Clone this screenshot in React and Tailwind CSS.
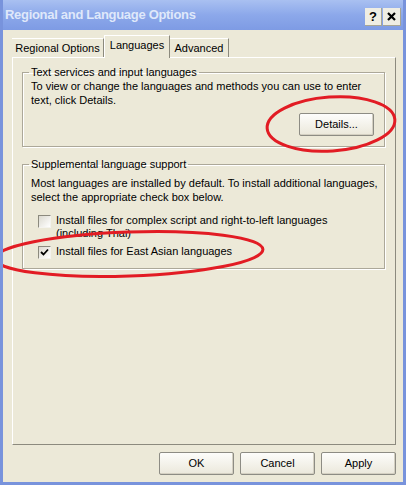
import React, { useState } from 'react';

const font = { fontFamily: '"Liberation Sans", Arial, sans-serif' };

const tabs = ['Regional Options', 'Languages', 'Advanced'];
const tabWidths = {
  'Regional Options': 'w-[92px]',
  Languages: 'w-[66px]',
  Advanced: 'w-[59px]',
};

// XP-ish push button
const Button = ({ children, className = '' }) => (
  <button
    className={`h-[23px] w-[75px] rounded-[2px] border border-[#8d8c84] bg-gradient-to-b from-[#fdfdfb] to-[#ebe8db] text-[11px] text-black shadow-[inset_-1px_-1px_0_#d4d0c2] ${className}`}
  >
    {children}
  </button>
);

const Checkbox = ({ checked, onChange }) => (
  <button
    onClick={onChange}
    className="mt-[1px] flex h-[13px] w-[13px] shrink-0 items-center justify-center border border-t-[#8c8a7e] border-l-[#8c8a7e] border-r-[#f4f3ee] border-b-[#f4f3ee] bg-gradient-to-br from-[#dcdad0] to-white"
  >
    {checked && (
      <svg width="9" height="9" viewBox="0 0 9 9">
        <path d="M1 4 L3.5 6.5 L8 1.5" fill="none" stroke="#000" strokeWidth="1.8" />
      </svg>
    )}
  </button>
);

const App = () => {
  const [activeTab, setActiveTab] = useState('Languages');
  const [complex, setComplex] = useState(false);
  const [eastAsian, setEastAsian] = useState(true);

  return (
    <div
      style={font}
      className="relative flex h-[485px] w-[406px] flex-col overflow-hidden whitespace-nowrap border-x-[3px] border-b-[3px] border-[#7893dc] bg-[#ece9d8] text-[11px] text-black"
    >
      {/* Title bar */}
      <div className="flex h-[30px] shrink-0 items-center justify-between bg-gradient-to-b from-[#a9c0f1] via-[#8ca8ea] to-[#7e9be4] pl-[2px] pr-[2px]">
        <span className="text-[13px] font-bold tracking-[-0.3px] text-[#dfe8fa]">
          Regional and Language Options
        </span>
        <div className="mt-[3px] flex gap-[1px]">
          <div className="flex h-[18px] w-[17px] items-center justify-center border-r border-b border-[#a7a594] bg-[#efede3] text-[13px] font-bold leading-none">
            ?
          </div>
          <div className="flex h-[18px] w-[18px] items-center justify-center border-r border-b border-[#a7a594] bg-[#efede3]">
            <svg width="9" height="9" viewBox="0 0 9 9">
              <path d="M1 1 L8 8 M8 1 L1 8" stroke="#000" strokeWidth="2.2" />
            </svg>
          </div>
        </div>
      </div>

      {/* Body */}
      <div className="flex flex-1 flex-col pl-[9px] pt-[5px]">
        {/* Tabs */}
        <div className="flex h-[22px] items-end">
          {tabs.map((tab) => {
            const active = tab === activeTab;
            return (
              <button
                key={tab}
                onClick={() => setActiveTab(tab)}
                className={`${tabWidths[tab]} flex items-center justify-center ${
                  active
                    ? 'relative z-10 -mb-[1px] h-[23px] border-t border-l border-r border-t-white border-l-white border-r-[#8c8a7e] bg-[#ece9d8] pb-[3px]'
                    : 'h-[19px] border-t border-r border-t-white border-r-[#8c8a7e] bg-[#ece9d8]'
                }`}
              >
                {tab}
              </button>
            );
          })}
        </div>

        {/* Tab panel */}
        <div className="flex h-[388px] w-[384px] flex-col border border-t-white border-l-white border-r-[#8c8a7e] border-b-[#8c8a7e] bg-[#ece9d8] pl-[9px]">
          <fieldset className="mt-[7px] h-[82px] w-[363px] border border-[#aca899] shadow-[1px_1px_0_#fff,inset_1px_1px_0_#fff]">
            <legend className="ml-[6px] px-[2px] leading-[14px]">Text services and input languages</legend>
            <div className="flex flex-col pl-[8px] pr-[10px]">
              <p className="leading-[14px]">
                To view or change the languages and methods you can use to enter
                <br />
                text, click Details.
              </p>
              <Button className="mt-[6px] self-end">Details...</Button>
            </div>
          </fieldset>

          <fieldset className="mt-[10px] h-[112px] w-[363px] border border-[#aca899] shadow-[1px_1px_0_#fff,inset_1px_1px_0_#fff]">
            <legend className="ml-[6px] px-[2px] leading-[14px]">Supplemental language support</legend>
            <div className="flex flex-col pl-[8px]">
              <p className="mt-[5px] leading-[14px]">
                Most languages are installed by default. To install additional languages,
                <br />
                select the appropriate check box below.
              </p>
              <div className="mt-[10px] ml-[7px] flex gap-[5px]">
                <Checkbox checked={complex} onChange={() => setComplex(!complex)} />
                <span className="leading-[13px]">
                  Install files for complex script and right-to-left languages
                  <br />
                  (including Thai)
                </span>
              </div>
              <div className="mt-[5px] ml-[7px] flex gap-[5px]">
                <Checkbox checked={eastAsian} onChange={() => setEastAsian(!eastAsian)} />
                <span className="leading-[13px]">Install files for East Asian languages</span>
              </div>
            </div>
          </fieldset>
        </div>

        {/* Dialog buttons */}
        <div className="mt-[7px] flex w-[384px] justify-end gap-[6px]">
          <Button>OK</Button>
          <Button>Cancel</Button>
          <Button>Apply</Button>
        </div>
      </div>

      {/* Red hand-drawn highlights over the dialog */}
      <svg
        className="pointer-events-none absolute -left-[3px] top-0 h-[485px] w-[406px]"
        viewBox="0 0 406 485"
      >
        <ellipse
          cx="331"
          cy="124"
          rx="64"
          ry="27"
          transform="rotate(-4 331 124)"
          fill="none"
          stroke="#e21c24"
          strokeWidth="3"
        />
        <ellipse
          cx="129"
          cy="254"
          rx="134"
          ry="22"
          transform="rotate(-2 129 254)"
          fill="none"
          stroke="#e21c24"
          strokeWidth="3"
        />
      </svg>
    </div>
  );
};

export default App;
